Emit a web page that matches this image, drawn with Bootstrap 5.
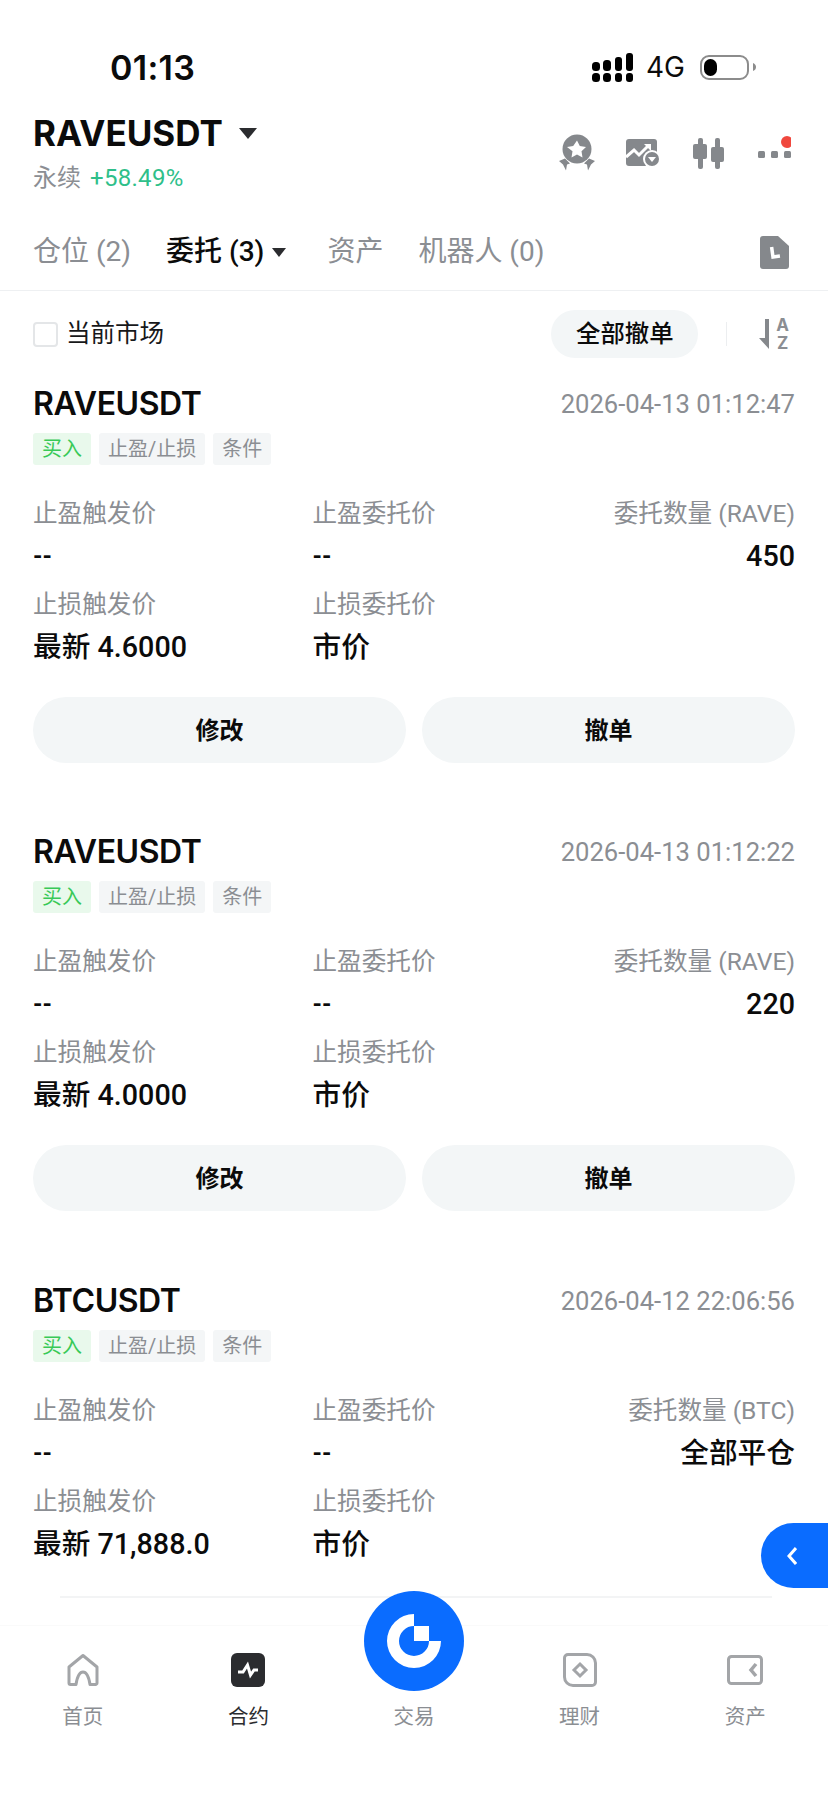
<!DOCTYPE html>
<html lang="zh-CN">
<head>
<meta charset="utf-8">
<title>RAVEUSDT</title>
<link href="https://cdn.jsdelivr.net/npm/bootstrap@5.3.0/dist/css/bootstrap.min.css" rel="stylesheet">
<style>
html,body{margin:0;background:#fff}
body{font-family:"Roboto","Noto Sans CJK SC",sans-serif;color:#0b0b0b;width:828px;height:1801px;overflow:hidden;position:relative}
.st-bar{height:111px;padding:47px 72px 0 110px;align-items:flex-start;margin-bottom:0}
.st-time{font-family:"Inter",sans-serif;font-size:34px;font-weight:600;line-height:42px;letter-spacing:.3px}
.st-right{height:40px;align-items:center}
.st-4g{font-family:"Inter",sans-serif;font-size:28px;line-height:40px;margin:0 15px 0 13px;font-weight:400}
.batt{width:49px;height:25px;border:2px solid #8c8c8c;border-radius:9px;padding:2px;display:block}
.batt i{display:block;width:13px;height:100%;background:#000;border-radius:7px}
.hdr{padding:0 37px 0 33px;height:84px}
.pair{font-family:"Inter",sans-serif;font-size:35px;font-weight:700;line-height:44px}
.subline{font-size:24px;line-height:34px;margin-top:6px;color:#8b8e93}
.gain{color:#2fbf8a;margin-left:9px;font-size:24px;letter-spacing:.3px}
.hdr-icons{gap:0}
.hi-a{margin-right:30px}.hi-b{margin-right:33px}.hi-c{margin-right:34px}
.tabbar{margin-top:32px;height:50px;padding:0 39px 0 33px;font-size:28px;line-height:50px;color:#8b8e93}
.tabbar .on{color:#0b0b0b;font-weight:500}
.tabgap1{margin-left:35px}.tabgap2{margin-left:41px}.tabgap3{margin-left:35px}
.tab-line{height:1px;background:#eef0f2;margin-top:13px}
.filter{margin-top:19px;height:48px;padding:0 39px 0 33px}
.chk{width:25px;height:25px;margin:0 8px 0 0;border:2px solid #e4e6e8;border-radius:4px;background:#fff;flex:none}
.chk-label{font-size:24.5px;color:#17181a;line-height:50px}
.pill-all{height:48px;width:147px;padding:0;border:0;border-radius:24px;background:#f3f6f7;color:#0b0b0b;font-size:24.4px;line-height:48px;font-weight:500;font-family:inherit}
.pill-all:hover{background:#f3f6f7;color:#0b0b0b}
.vsep{width:1px;height:24px;background:#eceef0;margin:0 32px 0 28px}
.sort-ab{font:700 17px/18px "Inter",sans-serif;color:#8b8e93;margin-left:6px;text-align:center}
.order{padding:0 33px;margin-bottom:66.4px}
.order-first{margin-top:23px}
.sym{font-family:"Inter",sans-serif;font-size:32px;font-weight:600;line-height:46px;height:44px;letter-spacing:-.45px}
.stamp{font-size:25.6px;color:#8b8e93;line-height:46px;height:44px}
.chips{margin-top:8px;gap:8px}
.chip{height:32px;line-height:33px;padding:0 9px;font-size:20px;background:#f4f6f7;color:#8b8e93;border-radius:3px}
.chip-buy{background:#e9f9ec;color:#38c957}
.fields{display:grid;grid-template-columns:279.500px 1fr auto;margin-top:28px;row-gap:0}
.lbl{font-size:24.6px;line-height:42px;height:40px;color:#8b8e93}
.val{font-size:28.7px;line-height:46px;height:46px;font-weight:500}
.val-dash{font-size:24px;font-weight:700}
.gap-row{grid-column:1/-1;height:5px}
.acts{margin-top:27px;gap:16px}
.act{flex:1 1 0;height:66px;border:0;border-radius:33px;background:#f3f6f7;color:#0b0b0b;font-size:24px;font-weight:600;font-family:inherit;padding:2px 0 0;line-height:64px}
.act:hover{background:#f3f6f7;color:#0b0b0b}
.foot-line{height:2px;background:#f3f4f5;margin:-37.4px 56px 0 60px}
.tabnav{margin-top:27px;border-top:1px solid #fafafa;padding-top:22px;display:grid;grid-template-columns:repeat(5,1fr)}
.nav-item-x{text-align:center;font-size:20.5px;line-height:30px;color:#8b8e93}
.nav-item-x.on{color:#2b2c2f}
.ic-slot{height:44px;margin-bottom:10px}
.hub{width:100px;height:100px;border-radius:50%;background:#0a6cff;flex:none;position:relative;margin-bottom:1px}
.side-tab{position:absolute;right:0;top:1523px;width:67px;height:65px;background:#0a6cff;border-radius:33px 0 0 33px}
.chev{margin-left:26px}
</style>
</head>
<body>
<div class="d-flex justify-content-between st-bar">
  <div class="st-time">01:13</div>
  <div class="d-flex st-right">
    <svg width="41" height="29" viewBox="0 0 41 29" fill="#000" aria-hidden="true"><rect x="0" y="9" width="8" height="9" rx="3.5"/><rect x="11" y="7" width="8" height="11" rx="3.5"/><rect x="23" y="4" width="7" height="14" rx="3"/><rect x="34" y="0" width="7" height="18" rx="3"/><rect x="0" y="20" width="8" height="9" rx="3.5"/><rect x="11" y="20" width="8" height="9" rx="3.5"/><rect x="23" y="20" width="7" height="9" rx="3"/><rect x="34" y="20" width="7" height="9" rx="3"/></svg>
    <span class="st-4g">4G</span>
    <span class="batt"><i></i></span>
    <svg class="ms-1" width="3" height="8" viewBox="0 0 3 8" fill="#8c8c8c" aria-hidden="true"><path d="M0 0c2 1 3 2 3 4s-1 3-3 4z"/></svg>
  </div>
</div>

<div class="d-flex justify-content-between align-items-center hdr">
  <div>
    <div class="d-flex align-items-center">
      <span class="pair">RAVEUSDT</span>
      <svg class="ms-3" width="18" height="11" viewBox="0 0 18 11" fill="#2b2c2f" aria-hidden="true"><path d="M0 0h18l-9 11z"/></svg>
    </div>
    <div class="subline">永续<span class="gain">+58.49%</span></div>
  </div>
  <div class="d-flex align-items-center hdr-icons">
    <svg class="hi-a" width="38" height="38" viewBox="0 0 38 38" aria-hidden="true"><circle cx="19" cy="15" r="14.5" fill="#85888c"/><path d="M19 6.500l2.800 5.600 6.200.9-4.500 4.300 1 6.100-5.500-2.900-5.500 2.900 1-6.100L9 13l6.200-.9z" fill="#fff"/><path d="M1 27l6-2.500 5 5-3 1-1 6-3-6z M37 27l-6-2.500-5 5 3 1 1 6 3-6z" fill="#85888c"/></svg>
    <svg class="hi-b" width="34" height="28" viewBox="0 0 34 28" aria-hidden="true"><rect x="0" y="0" width="31" height="27" rx="3" fill="#85888c"/><path d="M0 18l8-7 5 5 9-9" fill="none" stroke="#fff" stroke-width="3"/><path d="M18 5h7v7z" fill="#fff"/><circle cx="26" cy="20" r="9" fill="#fff"/><circle cx="26" cy="20" r="7" fill="#85888c"/><path d="M22 18h8l-4 5z" fill="#fff"/></svg>
    <svg class="hi-c" width="31" height="31" viewBox="0 0 31 31" fill="#85888c" aria-hidden="true"><rect x="5" y="0" width="5" height="31" rx="2"/><rect x="0" y="6" width="14" height="15" rx="2"/><rect x="22" y="0" width="5" height="31" rx="2"/><rect x="18" y="9" width="13" height="15" rx="2"/></svg>
    <svg width="33" height="34" viewBox="0 -5 33 34" aria-hidden="true"><g fill="#85888c"><rect x="0" y="10" width="7" height="7" rx="1.500"/><rect x="13" y="10" width="7" height="7" rx="1.500"/><rect x="26" y="10" width="7" height="7" rx="1.500"/></g><circle cx="29" cy="1" r="6" fill="#f0483e"/></svg>
  </div>
</div>

<div class="d-flex align-items-center tabbar">
  <span>仓位 (2)</span>
  <span class="on tabgap1">委托 (3)</span>
  <svg class="ms-2" width="14" height="9" viewBox="0 0 14 9" fill="#2b2c2f" aria-hidden="true"><path d="M0 0h14l-7 9z"/></svg>
  <span class="tabgap2">资产</span>
  <span class="tabgap3">机器人 (0)</span>
  <svg class="ms-auto" width="29" height="33" viewBox="0 0 29 33" aria-hidden="true"><path d="M3 0h15l11 10v20a3 3 0 0 1-3 3H3a3 3 0 0 1-3-3V3a3 3 0 0 1 3-3z" fill="#85888c"/><path d="M13 11v10h7" fill="none" stroke="#fff" stroke-width="3.500" transform="rotate(-8 13 21)"/></svg>
</div>
<div class="tab-line"></div>

<div class="d-flex align-items-center filter">
  <input class="form-check-input chk" type="checkbox" aria-label="当前市场">
  <span class="chk-label">当前市场</span>
  <button class="btn pill-all ms-auto" type="button">全部撤单</button>
  <span class="vsep"></span>
  <svg width="11" height="30" viewBox="0 0 11 30" aria-hidden="true"><path d="M6 0h4v21h-4zM0 19h10v11z" fill="#85888c"/></svg>
  <div class="sort-ab"><div>A</div><div>Z</div></div>
</div>

<div class="order order-first">
  <div class="d-flex justify-content-between"><span class="sym">RAVEUSDT</span><span class="stamp">2026-04-13 01:12:47</span></div>
  <div class="d-flex chips"><span class="chip chip-buy">买入</span><span class="chip">止盈/止损</span><span class="chip">条件</span></div>
  <div class="fields">
    <div class="lbl">止盈触发价</div><div class="lbl">止盈委托价</div><div class="lbl text-end">委托数量 (RAVE)</div>
    <div class="val val-dash">--</div><div class="val val-dash">--</div><div class="val text-end">450</div>
    <div class="gap-row"></div>
    <div class="lbl">止损触发价</div><div class="lbl">止损委托价</div><div></div>
    <div class="val">最新 4.6000</div><div class="val">市价</div><div></div>
  </div>
  <div class="d-flex acts"><button class="btn act" type="button">修改</button><button class="btn act" type="button">撤单</button></div>
</div>

<div class="order">
  <div class="d-flex justify-content-between"><span class="sym">RAVEUSDT</span><span class="stamp">2026-04-13 01:12:22</span></div>
  <div class="d-flex chips"><span class="chip chip-buy">买入</span><span class="chip">止盈/止损</span><span class="chip">条件</span></div>
  <div class="fields">
    <div class="lbl">止盈触发价</div><div class="lbl">止盈委托价</div><div class="lbl text-end">委托数量 (RAVE)</div>
    <div class="val val-dash">--</div><div class="val val-dash">--</div><div class="val text-end">220</div>
    <div class="gap-row"></div>
    <div class="lbl">止损触发价</div><div class="lbl">止损委托价</div><div></div>
    <div class="val">最新 4.0000</div><div class="val">市价</div><div></div>
  </div>
  <div class="d-flex acts"><button class="btn act" type="button">修改</button><button class="btn act" type="button">撤单</button></div>
</div>

<div class="order">
  <div class="d-flex justify-content-between"><span class="sym">BTCUSDT</span><span class="stamp">2026-04-12 22:06:56</span></div>
  <div class="d-flex chips"><span class="chip chip-buy">买入</span><span class="chip">止盈/止损</span><span class="chip">条件</span></div>
  <div class="fields">
    <div class="lbl">止盈触发价</div><div class="lbl">止盈委托价</div><div class="lbl text-end">委托数量 (BTC)</div>
    <div class="val val-dash">--</div><div class="val val-dash">--</div><div class="val text-end">全部平仓</div>
    <div class="gap-row"></div>
    <div class="lbl">止损触发价</div><div class="lbl">止损委托价</div><div></div>
    <div class="val">最新 71,888.0</div><div class="val">市价</div><div></div>
  </div>
</div>

<div class="foot-line"></div>
<nav class="tabnav">
  <div class="nav-item-x">
    <div class="ic-slot d-flex align-items-center justify-content-center"><svg width="34" height="34" viewBox="0 0 34 34" aria-hidden="true"><path d="M3 14L17 2.500 31 14v16a1.500 1.500 0 0 1-1.500 1.500H24C23 25 21 19 17 19s-6 6-7 12.500H4.500A1.500 1.500 0 0 1 3 30z" fill="none" stroke="#a3a5a8" stroke-width="3" stroke-linejoin="round"/></svg></div>
    首页
  </div>
  <div class="nav-item-x on">
    <div class="ic-slot d-flex align-items-center justify-content-center"><svg width="34" height="34" viewBox="0 0 34 34" aria-hidden="true"><rect width="34" height="34" rx="6" fill="#2b2c2f"/><path d="M7 19h5l4.500-7 3 10 3.500-5h4" fill="none" stroke="#fff" stroke-width="3"/></svg></div>
    合约
  </div>
  <div class="nav-item-x">
    <div class="ic-slot d-flex align-items-end justify-content-center"><div class="hub"><svg width="100" height="100" viewBox="-50 -50 100 100" aria-hidden="true"><path d="M0-27A27 27 0 1 0 27 0H15A15 15 0 1 1 0-15z" fill="#fff"/><rect x="0" y="-15" width="15" height="15" fill="#fff"/></svg></div></div>
    交易
  </div>
  <div class="nav-item-x">
    <div class="ic-slot d-flex align-items-center justify-content-center"><svg width="34" height="34" viewBox="0 0 34 34" aria-hidden="true"><path d="M5 1.500h19a8.500 8.500 0 0 1 8.500 8.500v19a3.500 3.500 0 0 1-3.500 3.500H10A8.500 8.500 0 0 1 1.500 24V5A3.500 3.500 0 0 1 5 1.500z" fill="none" stroke="#a3a5a8" stroke-width="3"/><path d="M17 11l6 6-6 6-6-6z" fill="none" stroke="#a3a5a8" stroke-width="3"/></svg></div>
    理财
  </div>
  <div class="nav-item-x">
    <div class="ic-slot d-flex align-items-center justify-content-center"><svg width="36" height="30" viewBox="0 0 36 30" aria-hidden="true"><rect x="1.500" y="1.500" width="33" height="27" rx="3" fill="none" stroke="#a3a5a8" stroke-width="3"/><path d="M29 9l-5 6 5 6" fill="none" stroke="#a3a5a8" stroke-width="3.500"/></svg></div>
    资产
  </div>
</nav>

<div class="side-tab d-flex align-items-center"><svg class="chev" width="10" height="18" viewBox="0 0 10 18" aria-hidden="true"><path d="M9 1L2 9l7 8" fill="none" stroke="#fff" stroke-width="3"/></svg></div>

<script src="https://cdn.jsdelivr.net/npm/bootstrap@5.3.0/dist/js/bootstrap.bundle.min.js"></script>
</body>
</html>
